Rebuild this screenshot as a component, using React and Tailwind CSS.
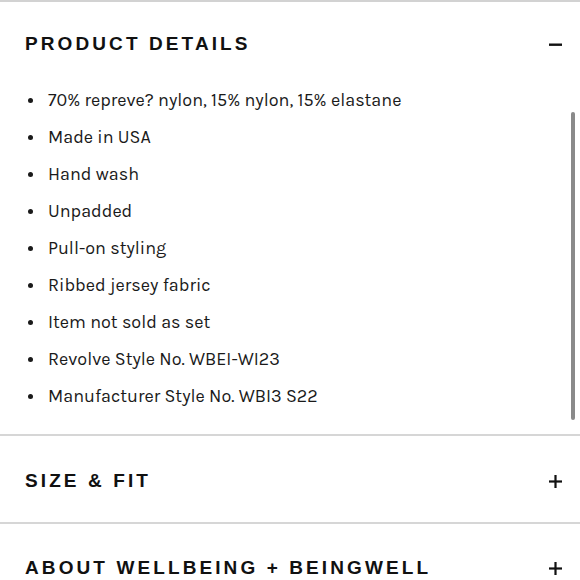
import React from 'react';

const details = [
    '70% repreve? nylon, 15% nylon, 15% elastane',
    'Made in USA',
    'Hand wash',
    'Unpadded',
    'Pull-on styling',
    'Ribbed jersey fabric',
    'Item not sold as set',
    'Revolve Style No. WBEI-WI23',
    'Manufacturer Style No. WBI3 S22',
];

function Minus() {
    return (
        <svg width="13" height="13" viewBox="0 0 13 13">
            <rect x="0" y="5.5" width="13" height="2.4" fill="#111" />
        </svg>
    );
}

function Plus() {
    return (
        <svg width="13" height="13" viewBox="0 0 13 13">
            <rect x="0" y="5.4" width="13" height="2.2" fill="#111" />
            <rect x="5.4" y="0" width="2.2" height="13" fill="#111" />
        </svg>
    );
}

function Heading({ children }) {
    return (
        <h2 className="text-[19px] font-bold tracking-[3.1px] text-[#111] font-['Liberation_Sans',Arial,sans-serif]">
            {children}
        </h2>
    );
}

export default function App() {
    return (
        <div className="w-[580px] h-[580px] overflow-hidden bg-white border-t-2 border-[#d2d2d2]">
            {/* Product details (open) */}
            <section className="relative border-b-2 border-[#d6d6d6] pb-[19px]">
                <div className="h-[80px] pt-[4px] pl-[25px] pr-[18px] flex items-center justify-between">
                    <Heading>PRODUCT DETAILS</Heading>
                    <Minus />
                </div>
                <ul className="font-['Karla','Lato',sans-serif] text-[18px] text-[#1a1a1a]">
                    {details.map((d) => (
                        <li key={d} className="h-[37px] flex items-center">
                            <span className="w-[5px] h-[5px] rounded-full bg-[#1a1a1a] ml-[28px] mr-[15px]"></span>
                            <span>{d}</span>
                        </li>
                    ))}
                </ul>
                {/* scrollbar */}
                <div className="absolute right-[5px] top-[110px] w-[4px] h-[308px] rounded-full bg-[#8a8a8a]"></div>
            </section>

            {/* Size & fit */}
            <section className="h-[88px] pt-[4px] pl-[25px] pr-[18px] flex items-center justify-between border-b-2 border-[#d6d6d6]">
                <Heading>SIZE &amp; FIT</Heading>
                <Plus />
            </section>

            {/* About */}
            <section className="h-[84px] pt-[4px] pl-[25px] pr-[18px] flex items-center justify-between">
                <Heading>ABOUT WELLBEING + BEINGWELL</Heading>
                <Plus />
            </section>
        </div>
    );
}
